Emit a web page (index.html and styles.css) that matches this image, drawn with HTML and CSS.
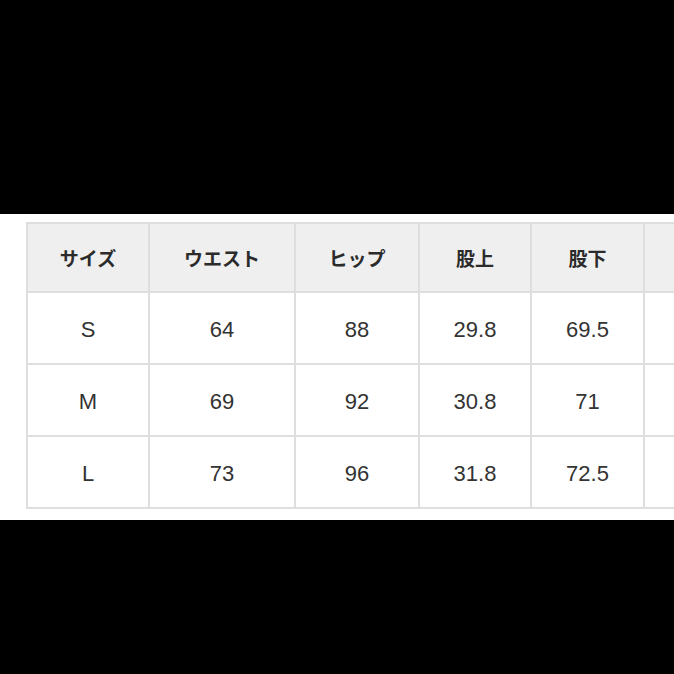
FILE: index.html
```html
<!DOCTYPE html>
<html lang="ja">
<head>
<meta charset="utf-8">
<link rel="stylesheet" href="styles.css">
</head>
<body>
<div class="top"></div>
<div class="band">
  <table class="size">
    <colgroup>
      <col class="c1"><col class="c2"><col class="c3"><col class="c4"><col class="c5"><col class="c6">
    </colgroup>
    <thead>
      <tr><th>サイズ</th><th>ウエスト</th><th>ヒップ</th><th>股上</th><th>股下</th><th></th></tr>
    </thead>
    <tbody>
      <tr><td>S</td><td>64</td><td>88</td><td>29.8</td><td>69.5</td><td></td></tr>
      <tr><td>M</td><td>69</td><td>92</td><td>30.8</td><td>71</td><td></td></tr>
      <tr><td>L</td><td>73</td><td>96</td><td>31.8</td><td>72.5</td><td></td></tr>
    </tbody>
  </table>
</div>
</body>
</html>
```

FILE: styles.css
```css
html, body {
  margin: 0;
  padding: 0;
  background: #000;
  overflow: hidden;
  width: 674px;
  height: 674px;
}
.top {
  height: 214px;
}
.band {
  background: #fff;
  height: 306px;
  padding: 8px 0 0 26px;
  box-sizing: border-box;
  overflow: hidden;
}
.size {
  border-collapse: collapse;
  table-layout: fixed;
  width: 740px;
  font-family: "Liberation Sans", Arial, "Noto Sans CJK JP", sans-serif;
  color: #333;
}
.c1 { width: 122px; }
.c2 { width: 146px; }
.c3 { width: 124px; }
.c4 { width: 112px; }
.c5 { width: 113px; }
.c6 { width: 123px; }
.size th, .size td {
  border: 2px solid #dedede;
  text-align: center;
  vertical-align: middle;
  padding: 0;
  white-space: nowrap;
  overflow: hidden;
}
.size th {
  background: #efefef;
  height: 67px;
  font-family: "Noto Sans CJK JP", sans-serif;
  font-weight: 700;
  font-size: 19px;
  color: #2b2b2b;
}
.size td {
  height: 67px;
  padding-top: 3px;
  font-size: 22px;
  color: #333;
}
```
